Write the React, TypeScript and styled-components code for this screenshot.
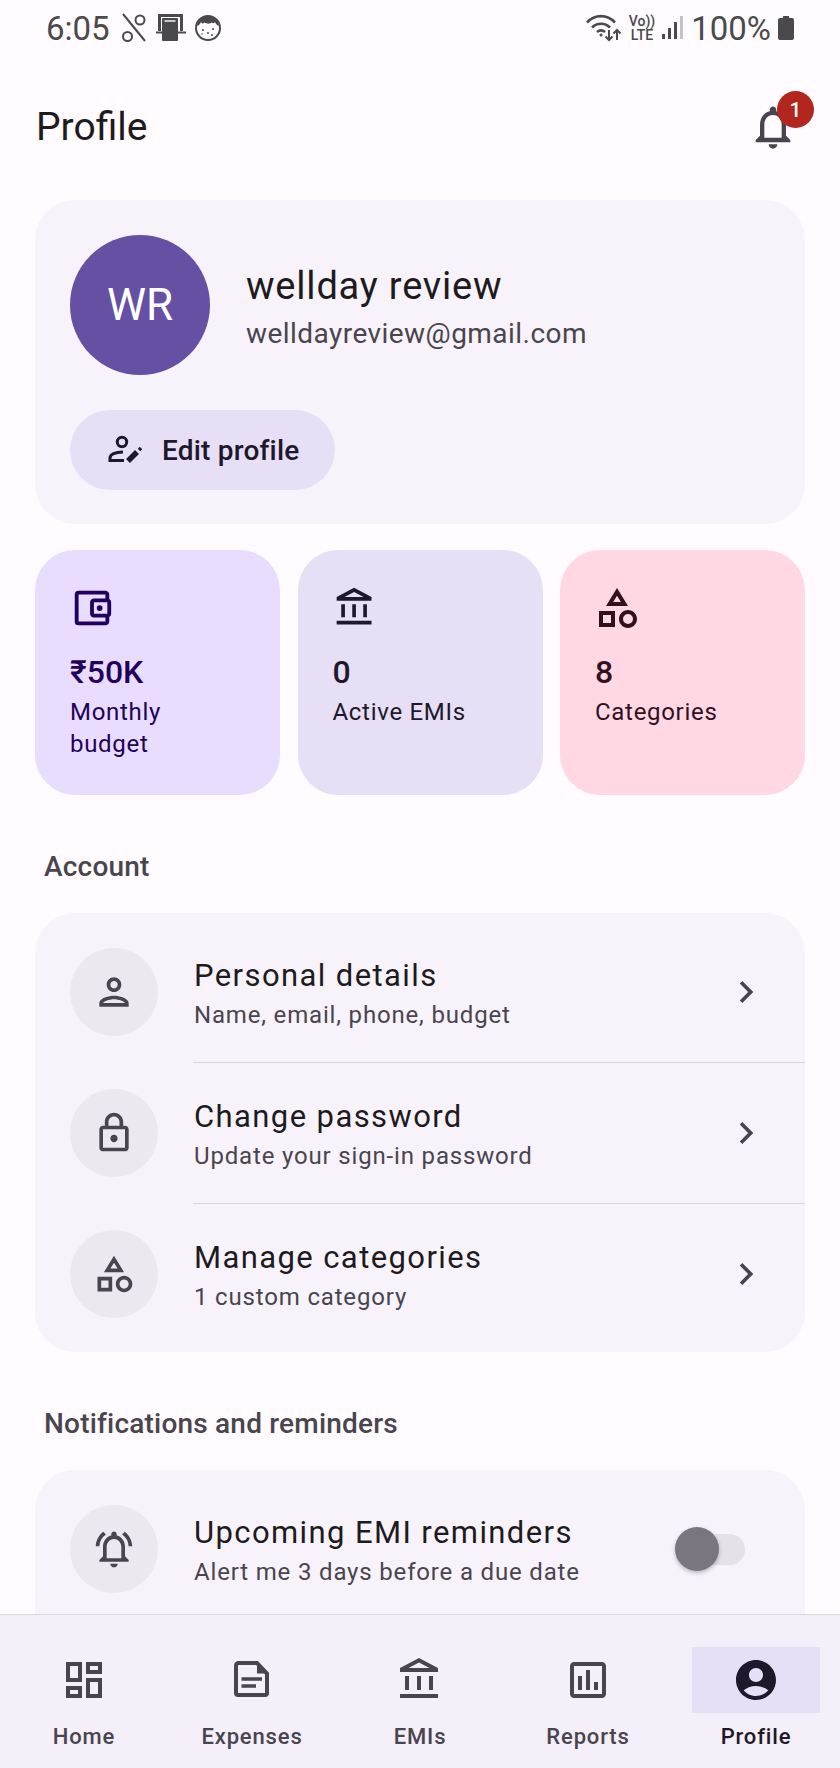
import type { ReactNode } from "react";
import styled, { createGlobalStyle } from "styled-components";
import {
  MdAccountCircle,
  MdChevronRight,
  MdOutlineAccountBalance,
  MdOutlineAccountBalanceWallet,
  MdOutlineAssessment,
  MdOutlineCategory,
  MdOutlineDashboard,
  MdOutlineLock,
  MdOutlineNotifications,
  MdOutlineNotificationsActive,
  MdOutlinePerson,
} from "react-icons/md";

const GlobalStyle = createGlobalStyle`
  html, body {
    margin: 0;
    padding: 0;
    background: #fffbff;
  }
  * {
    box-sizing: border-box;
  }
`;

const Screen = styled.div`
  width: 840px;
  height: 1768px;
  display: flex;
  flex-direction: column;
  overflow: hidden;
  background: #fffbff;
  color: #1d1b20;
  font-family: Roboto, "Liberation Sans", sans-serif;
`;

const StatusBar = styled.div`
  height: 56px;
  flex: none;
  display: flex;
  align-items: center;
  justify-content: space-between;
  padding: 0 46px;
  color: #4a4a4c;
  font-size: 33px;
`;

const StatusGroup = styled.div<{ $gap: number }>`
  display: flex;
  align-items: center;
  gap: ${(p) => p.$gap}px;
`;

const Volte = styled.div`
  font-size: 14px;
  font-weight: 500;
  line-height: 14px;
  text-align: center;
`;

const TopBar = styled.div`
  height: 142px;
  flex: none;
  display: flex;
  align-items: center;
  justify-content: space-between;
  padding: 0 41px 0 36px;
`;

const Title = styled.h1`
  margin: 0;
  font-size: 39px;
  font-weight: 400;
`;

const BellWrap = styled.div`
  position: relative;
  width: 52px;
  height: 52px;
  color: #49454f;
  font-size: 52px;
  display: flex;
`;

const Badge = styled.span`
  position: absolute;
  top: -10px;
  right: -15px;
  width: 37px;
  height: 37px;
  border-radius: 50%;
  background: #b3261e;
  color: #fff;
  font-size: 21px;
  font-weight: 500;
  display: flex;
  align-items: center;
  justify-content: center;
`;

const Content = styled.main`
  flex: 1;
  min-height: 0;
  overflow: hidden;
  padding: 2px 35px 0;
`;

const ProfileCard = styled.section`
  background: #f8f3fb;
  border-radius: 40px;
  padding: 35px;
  height: 324px;
`;

const ProfileHead = styled.div`
  display: flex;
  align-items: center;
  gap: 36px;
`;

const Avatar = styled.div`
  width: 140px;
  height: 140px;
  border-radius: 50%;
  background: #6650a4;
  color: #fff;
  font-size: 44px;
  display: flex;
  align-items: center;
  justify-content: center;
`;

const Identity = styled.div`
  padding-top: 4px;
`;

const Name = styled.div`
  font-size: 38px;
  line-height: 46px;
  letter-spacing: 0.8px;
`;

const Email = styled.div`
  margin-top: 7px;
  font-size: 28px;
  line-height: 36px;
  letter-spacing: 0.45px;
  color: #49454f;
`;

const EditButton = styled.button`
  margin-top: 35px;
  height: 80px;
  width: 265px;
  border: 0;
  border-radius: 40px;
  background: #e6dff6;
  color: #1d192b;
  font-family: inherit;
  font-size: 28px;
  font-weight: 500;
  letter-spacing: 0.2px;
  display: flex;
  align-items: center;
  padding: 0 0 0 37px;
  gap: 19px;
`;

const StatGrid = styled.div`
  margin-top: 26px;
  display: grid;
  grid-template-columns: repeat(3, 245px);
  justify-content: space-between;
`;

const StatCard = styled.div<{ $bg: string; $fg: string }>`
  height: 245px;
  border-radius: 40px;
  padding: 34px 50px 0 35px;
  background: ${(p) => p.$bg};
  color: ${(p) => p.$fg};
`;

const StatIcon = styled.div<{ $size: number }>`
  height: 48px;
  width: 48px;
  font-size: ${(p) => p.$size}px;
  display: flex;
  align-items: center;
  justify-content: center;
  margin-left: -2px;
`;

const StatValue = styled.div`
  margin-top: 20px;
  font-size: 32px;
  font-weight: 500;
  line-height: 40px;
`;

const StatLabel = styled.div`
  margin-top: 4px;
  font-size: 24px;
  line-height: 32px;
  letter-spacing: 0.7px;
`;

const SectionLabel = styled.h2`
  margin: 54px 0 28px 9px;
  font-size: 28px;
  font-weight: 500;
  line-height: 36px;
  letter-spacing: 0.2px;
  color: #49454f;
`;

const ListCard = styled.section<{ $clipped?: boolean }>`
  background: #f8f3fb;
  border-radius: 40px;
  padding: 9px 0 7px;
  min-height: ${(p) => (p.$clipped ? "400px" : "0")};
`;

const Row = styled.div`
  display: flex;
  align-items: center;
  padding: 26px 0 27px 35px;
  position: relative;
  & + &::before {
    content: "";
    position: absolute;
    top: -1px;
    left: 158px;
    right: 0;
    height: 1px;
    background: #d9d5dc;
  }
`;

const RowIcon = styled.div`
  width: 88px;
  height: 88px;
  flex: none;
  border-radius: 50%;
  background: #ece8ef;
  color: #49454f;
  font-size: 44px;
  display: flex;
  align-items: center;
  justify-content: center;
`;

const RowText = styled.div`
  flex: 1;
  margin-left: 36px;
  padding-top: 3px;
`;

const RowTitle = styled.div`
  font-size: 31px;
  line-height: 40px;
  letter-spacing: 1.4px;
`;

const RowSub = styled.div`
  margin-top: 3px;
  font-size: 24px;
  line-height: 32px;
  letter-spacing: 0.83px;
  color: #49454f;
`;

const Chevron = styled.div`
  font-size: 44px;
  display: flex;
  margin-right: 37px;
  color: #49454f;
`;

const Toggle = styled.div`
  position: relative;
  width: 70px;
  height: 31px;
  margin-right: 60px;
  border-radius: 16px;
  background: #e6e0e9;
`;

const Thumb = styled.span`
  position: absolute;
  left: 0;
  top: -7px;
  width: 44px;
  height: 44px;
  border-radius: 50%;
  background: #7a757f;
  box-shadow: 0 2px 4px rgba(0, 0, 0, 0.25);
`;

const BottomNav = styled.nav`
  height: 154px;
  flex: none;
  border-top: 1px solid #dcd8df;
  background: #f4eff8;
  display: grid;
  grid-template-columns: repeat(5, 168px);
`;

const NavItem = styled.div<{ $active?: boolean }>`
  display: flex;
  flex-direction: column;
  align-items: center;
  padding-top: 32px;
  color: ${(p) => (p.$active ? "#1d192b" : "#49454f")};
`;

const NavIcon = styled.div<{ $active?: boolean }>`
  width: 128px;
  height: 66px;
  font-size: 48px;
  display: flex;
  align-items: center;
  justify-content: center;
  background: ${(p) => (p.$active ? "#e6dff6" : "transparent")};
`;

const NavLabel = styled.div`
  margin-top: 10px;
  font-size: 22px;
  font-weight: 500;
  line-height: 28px;
  letter-spacing: 0.85px;
`;

function PercentOffIcon() {
  return (
    <svg width="26" height="30" viewBox="0 0 26 30" fill="none" stroke="currentColor" strokeWidth="2">
      <path d="M2 1l22 27" />
      <circle cx="19" cy="7" r="4.500" />
      <circle cx="6.500" cy="23.500" r="4.500" />
    </svg>
  );
}

function PhoneFrameIcon() {
  return (
    <svg width="32" height="30" viewBox="0 0 32 30" fill="currentColor">
      <path d="M3 1h25v17h-3V4H6v14H3z" />
      <path d="M1 18.500h7v2H1zM23 18.500h8v2h-8z" />
      <rect x="7" y="5" width="16" height="23" rx="1" />
      <rect x="9.500" y="7" width="11" height="2" fill="#c9c9cb" />
    </svg>
  );
}

function FaceIcon() {
  return (
    <svg width="26" height="26" viewBox="0 0 26 26">
      <circle cx="13" cy="13" r="12" fill="#fff" stroke="currentColor" strokeWidth="2" />
      <path fill="currentColor" d="M2 11C3 4 8 1 13 1s10 3 11 10c-2-.5-3-2-4-4-1 1.500-2 1.500-3.500.5-1 1.500-5 1.500-7 0C8 9 7 9 6 7c-1 2-2 3.500-4 4z" />
      <g fill="currentColor">
        <circle cx="8" cy="15" r="1" />
        <circle cx="13" cy="18" r="1" />
        <circle cx="18" cy="14" r="1" />
        <circle cx="17" cy="20" r="1" />
        <circle cx="7" cy="19" r="0.800" />
      </g>
    </svg>
  );
}

function WifiIcon() {
  return (
    <svg width="36" height="28" viewBox="0 0 36 28" fill="none" stroke="currentColor" strokeWidth="2.600">
      <path d="M1 8.500C9 0 21 0 29 8.500" />
      <path d="M6 13.500c5-5 13-5 18 0" />
      <path d="M11 18c2.500-2 5.500-2 8 0" />
      <circle cx="15" cy="21" r="1.500" fill="currentColor" stroke="none" />
      <path strokeWidth="2" d="M23 16v10M19.500 22.500L23 26l3.500-3.500M31 26V16M27.500 19.500L31 16l3.500 3.500" />
    </svg>
  );
}

function SignalIcon() {
  return (
    <svg width="22" height="24" viewBox="0 0 22 24">
      <rect x="0" y="18" width="3" height="5" fill="#4a4a4c" />
      <rect x="6" y="12" width="3" height="11" fill="#4a4a4c" />
      <rect x="12" y="6" width="3" height="17" fill="#4a4a4c" />
      <rect x="18" y="0" width="3" height="23" fill="#c4c4c6" />
    </svg>
  );
}

function BatteryIcon() {
  return (
    <svg width="16" height="24" viewBox="0 0 16 24" fill="currentColor">
      <path d="M5 0h6v2h3a2 2 0 0 1 2 2v18a2 2 0 0 1-2 2H2a2 2 0 0 1-2-2V4a2 2 0 0 1 2-2h3z" />
    </svg>
  );
}

function PersonEditIcon() {
  return (
    <svg width="36" height="30" viewBox="0 0 36 30" fill="none" stroke="currentColor" strokeWidth="3">
      <circle cx="15" cy="7" r="4.700" />
      <path d="M17 25.500H3v-2.500c0-3.500 5-6 13-6" />
      <path strokeWidth="5.500" d="M21 26l9-9" />
      <path strokeWidth="3.500" d="M32 15l2-2" />
    </svg>
  );
}

function ExpensesIcon() {
  return (
    <svg width="48" height="48" viewBox="0 0 48 48" fill="none" stroke="currentColor" strokeWidth="4">
      <path d="M10.500 7H29l10 10.500V37a2 2 0 0 1-2 2H10a2 2 0 0 1-2-2V9.500A2.500 2.500 0 0 1 10.500 7z" />
      <path d="M29 7l10 10.500H29z" fill="currentColor" stroke="none" />
      <path strokeWidth="3.500" d="M13.500 23H34M13.500 30H28" />
    </svg>
  );
}

type ListRowProps = {
  icon: ReactNode;
  title: string;
  sub: string;
  trailing: ReactNode;
};

function ListRow({ icon, title, sub, trailing }: ListRowProps) {
  return (
    <Row>
      <RowIcon>{icon}</RowIcon>
      <RowText>
        <RowTitle>{title}</RowTitle>
        <RowSub>{sub}</RowSub>
      </RowText>
      {trailing}
    </Row>
  );
}

const arrow = (
  <Chevron>
    <MdChevronRight />
  </Chevron>
);

const stats = [
  { icon: <MdOutlineAccountBalanceWallet />, size: 46, value: "₹50K", label: "Monthly budget", bg: "#e9ddff", fg: "#22005d" },
  { icon: <MdOutlineAccountBalance />, size: 44, value: "0", label: "Active EMIs", bg: "#e6dff6", fg: "#1d192b" },
  { icon: <MdOutlineCategory />, size: 48, value: "8", label: "Categories", bg: "#ffd8e4", fg: "#31111d" },
];

const navItems = [
  { icon: <MdOutlineDashboard />, label: "Home" },
  { icon: <ExpensesIcon />, label: "Expenses" },
  { icon: <MdOutlineAccountBalance />, label: "EMIs" },
  { icon: <MdOutlineAssessment />, label: "Reports" },
  { icon: <MdAccountCircle />, label: "Profile", active: true },
];

export default function App() {
  return (
    <Screen>
      <GlobalStyle />
      <StatusBar>
        <StatusGroup $gap={11}>
          <span>6:05</span>
          <StatusGroup $gap={8}>
            <PercentOffIcon />
            <PhoneFrameIcon />
            <FaceIcon />
          </StatusGroup>
        </StatusGroup>
        <StatusGroup $gap={7}>
          <WifiIcon />
          <Volte>
            Vo))
            <br />
            LTE
          </Volte>
          <SignalIcon />
          <span>100%</span>
          <BatteryIcon />
        </StatusGroup>
      </StatusBar>
      <TopBar>
        <Title>Profile</Title>
        <BellWrap>
          <MdOutlineNotifications />
          <Badge>1</Badge>
        </BellWrap>
      </TopBar>
      <Content>
        <ProfileCard>
          <ProfileHead>
            <Avatar>WR</Avatar>
            <Identity>
              <Name>wellday review</Name>
              <Email>welldayreview@gmail.com</Email>
            </Identity>
          </ProfileHead>
          <EditButton>
            <PersonEditIcon />
            Edit profile
          </EditButton>
        </ProfileCard>
        <StatGrid>
          {stats.map((s) => (
            <StatCard key={s.label} $bg={s.bg} $fg={s.fg}>
              <StatIcon $size={s.size}>{s.icon}</StatIcon>
              <StatValue>{s.value}</StatValue>
              <StatLabel>{s.label}</StatLabel>
            </StatCard>
          ))}
        </StatGrid>
        <SectionLabel>Account</SectionLabel>
        <ListCard>
          <ListRow icon={<MdOutlinePerson />} title="Personal details" sub="Name, email, phone, budget" trailing={arrow} />
          <ListRow icon={<MdOutlineLock />} title="Change password" sub="Update your sign-in password" trailing={arrow} />
          <ListRow icon={<MdOutlineCategory />} title="Manage categories" sub="1 custom category" trailing={arrow} />
        </ListCard>
        <SectionLabel>Notifications and reminders</SectionLabel>
        <ListCard $clipped>
          <ListRow
            icon={<MdOutlineNotificationsActive />}
            title="Upcoming EMI reminders"
            sub="Alert me 3 days before a due date"
            trailing={
              <Toggle>
                <Thumb />
              </Toggle>
            }
          />
        </ListCard>
      </Content>
      <BottomNav>
        {navItems.map((n) => (
          <NavItem key={n.label} $active={n.active}>
            <NavIcon $active={n.active}>{n.icon}</NavIcon>
            <NavLabel>{n.label}</NavLabel>
          </NavItem>
        ))}
      </BottomNav>
    </Screen>
  );
}
